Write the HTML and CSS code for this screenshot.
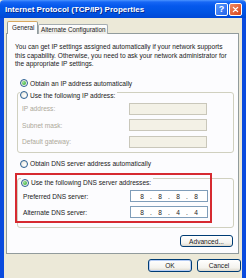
FILE: index.html
```html
<!DOCTYPE html>
<html>
<head>
<meta charset="utf-8">
<link rel="stylesheet" href="styles.css">
</head>
<body>
<div class="window">
  <div class="titlebar">
    <span class="title">Internet Protocol (TCP/IP) Properties</span>
    <span class="tb-btn tb-help">?</span>
    <span class="tb-btn tb-close"><svg width="13" height="13" viewBox="0 0 13 13"><path d="M4 4 L9 9 M9 4 L4 9" stroke="#fff" stroke-width="1.6" stroke-linecap="round"/></svg></span>
  </div>
  <div class="frame">
    <div class="tabs">
      <div class="tab active">General</div>
      <div class="tab">Alternate Configuration</div>
    </div>
    <div class="panel">
      <p class="intro">You can get IP settings assigned automatically if your network supports<br>this capability. Otherwise, you need to ask your network administrator for<br>the appropriate IP settings.</p>
      <div class="radio-row top"><span class="radio checked"></span><span>Obtain an IP address automatically</span></div>
      <div class="group ip">
        <div class="legend"><span class="radio"></span><span>Use the following IP address:</span></div>
        <div class="row"><span class="lbl disabled">IP address:</span><span class="ipbox off"></span></div>
        <div class="row"><span class="lbl disabled">Subnet mask:</span><span class="ipbox off"></span></div>
        <div class="row"><span class="lbl disabled">Default gateway:</span><span class="ipbox off"></span></div>
      </div>
      <div class="radio-row dns-auto"><span class="radio"></span><span>Obtain DNS server address automatically</span></div>
      <div class="group dns">
        <div class="legend"><span class="radio checked"></span><span>Use the following DNS server addresses:</span></div>
        <div class="row"><span class="lbl">Preferred DNS server:</span><span class="ipbox"><span>8</span><i>.</i><span>8</span><i>.</i><span>8</span><i>.</i><span>8</span></span></div>
        <div class="row"><span class="lbl">Alternate DNS server:</span><span class="ipbox"><span>8</span><i>.</i><span>8</span><i>.</i><span>4</span><i>.</i><span>4</span></span></div>
      </div>
      <div class="adv-row"><span class="btn adv">Advanced...</span></div>
      <div class="highlight"></div>
    </div>
    <div class="footer">
      <span class="btn default">OK</span>
      <span class="btn">Cancel</span>
    </div>
  </div>
</div>
</body>
</html>
```
FILE: styles.css
```css
* { box-sizing: border-box; }
html, body { margin: 0; padding: 0; background: #fff; }
body {
  width: 250px;
  height: 278px;
  overflow: hidden;
  font-family: "Liberation Sans", Arial, sans-serif;
  font-size: 6.6px;
  color: #1a1a1a;
}
.window {
  width: 246px;
  height: 278px;
  display: flex;
  flex-direction: column;
  background: #ECE9D8;
}
.titlebar {
  height: 18px;
  flex: none;
  display: flex;
  align-items: center;
  padding: 0 4px 0 5px;
  background: linear-gradient(#4A94FF 0, #1767F5 2px, #0558EC 6px, #0054E3 12px, #0048D6 18px);
  border-radius: 4px 4px 0 0;
}
.title {
  flex: 1;
  color: #fff;
  font-weight: bold;
  font-size: 8px;
  white-space: nowrap;
  text-shadow: 1px 1px 0 #0B2A8C;
}
.tb-btn {
  width: 13px;
  height: 13px;
  border: 1px solid #fff;
  border-radius: 2px;
  display: flex;
  align-items: center;
  justify-content: center;
  color: #fff;
  font-weight: bold;
  font-size: 9px;
}
.tb-help {
  margin-right: 1px;
  background: linear-gradient(135deg, #5C9BFF, #2262E8);
}
.tb-close {
  background: linear-gradient(135deg, #F08A62, #D8431A);
}
.frame {
  flex: 1;
  display: flex;
  flex-direction: column;
  border-left: 4px solid #0A4BDE;
  border-right: 4px solid #0A4BDE;
  padding: 3px 1px 0 2px;
}
.tabs {
  display: flex;
  align-items: flex-end;
  height: 13px;
  padding-left: 1px;
  margin-bottom: -1px;
  position: relative;
  z-index: 1;
}
.tab {
  height: 10px;
  display: flex;
  align-items: center;
  padding: 0 2px;
  border: 1px solid #A5ACB0;
  border-bottom: none;
  border-radius: 2px 2px 0 0;
  background: linear-gradient(#FFFFFF, #ECEBE6);
  white-space: nowrap;
  font-size: 6.3px;
}
.tab.active {
  width: 31px;
  height: 13px;
  padding: 0 0 1px 4px;
  background: #FCFCFE;
  border-color: #919B9C;
  border-top: 1px solid #D9A860;
}
.panel {
  position: relative;
  height: 221px;
  margin-right: 2px;
  border: 1px solid #919B9C;
  background: #FCFCFE;
  padding: 9px 0 0 0;
  display: flex;
  flex-direction: column;
}
.intro {
  margin: 0 0 0 8px;
  line-height: 8.5px;
  white-space: nowrap;
}
.radio-row {
  height: 10px;
  display: flex;
  align-items: center;
  gap: 2px;
  margin-left: 13px;
  white-space: nowrap;
}
.radio-row.top { margin-top: 9.5px; }
.radio-row.dns-auto { margin-top: 6px; }
.radio {
  width: 8px;
  height: 8px;
  flex: none;
  border-radius: 50%;
  border: 1px solid #2A5F92;
  background: radial-gradient(circle at 65% 65%, #FFFFFF 0, #EEEDE6 60%, #D6D3C8 100%);
  display: flex;
  align-items: center;
  justify-content: center;
}
.radio.checked::after {
  content: "";
  width: 4px;
  height: 4px;
  border-radius: 50%;
  background: radial-gradient(circle at 35% 35%, #9AE49A, #21A121);
}
.group {
  border: 1px solid #D0D0BF;
  border-radius: 3px;
  margin: 0 4px 0 10px;
}
.group.ip { margin-top: 4px; padding: 0 0 4px 4px; }
.group.dns { margin-top: 9px; padding: 0 0 9px 5px; }
.legend {
  height: 10px;
  margin: -6px 0 2.5px -2px;
  padding-right: 2px;
  display: inline-flex;
  align-items: center;
  gap: 2px;
  background: #FCFCFE;
  white-space: nowrap;
}
.group .row + .row { margin-top: 4.5px; }
.group.dns .row + .row { margin-top: 4px; }
.row {
  display: flex;
  align-items: center;
  height: 12px;
}
.lbl {
  width: 107px;
  flex: none;
  white-space: nowrap;
}
.lbl.disabled { color: #ACA899; }
.ipbox {
  width: 78px;
  height: 12px;
  border: 1px solid #7F9DB9;
  background: #fff;
  display: flex;
  align-items: center;
  justify-content: space-around;
  padding: 0 6px;
}
.ipbox i { font-style: normal; }
.ipbox.off {
  border-color: #C9C7BA;
  background: #F3F1E6;
}
.adv-row {
  display: flex;
  justify-content: flex-end;
  margin: 7px 5px 0 0;
}
.btn {
  height: 13px;
  width: 44px;
  display: flex;
  align-items: center;
  justify-content: center;
  border: 1px solid #003C74;
  border-radius: 3px;
  background: linear-gradient(#FFFFFF, #F4F3EE 70%, #DCD8CC);
  white-space: nowrap;
}
.btn.adv { width: 53px; height: 12px; }
.btn.default { box-shadow: inset 0 0 0 1px #B6CDF5; }
.footer {
  display: flex;
  justify-content: flex-end;
  gap: 5px;
  margin-top: 5px;
}
.highlight {
  position: absolute;
  left: 8px;
  top: 139px;
  width: 197px;
  height: 50px;
  border: 2px solid #D62A30;
}
```
